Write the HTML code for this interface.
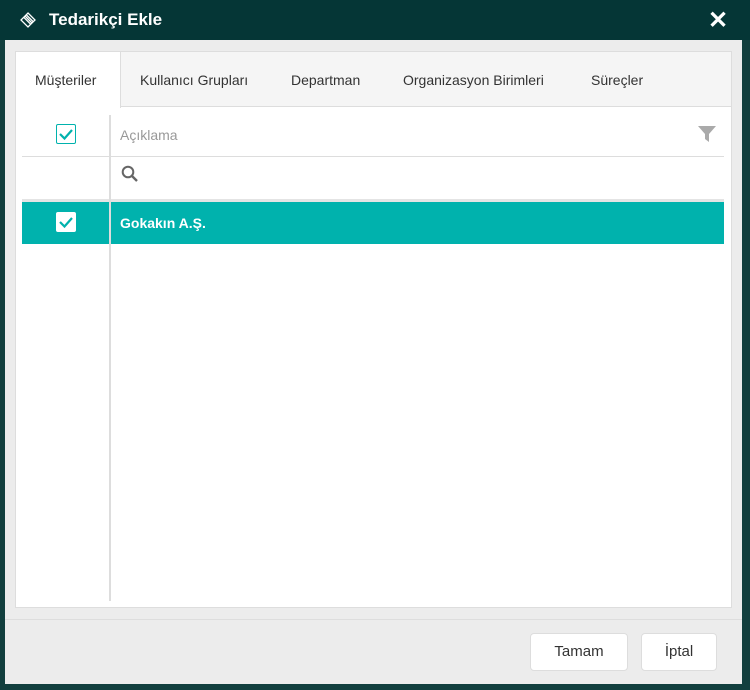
<!DOCTYPE html>
<html><head><meta charset="utf-8"><style>
*{box-sizing:border-box;margin:0;padding:0}
body{width:750px;height:690px;background:#123f3e;font-family:"Liberation Sans",sans-serif;position:relative;overflow:hidden}
.top{position:absolute;left:0;top:0;width:750px;height:40px;background:#053636}
.title{position:absolute;left:49px;top:10px;color:#fff;font-weight:bold;font-size:17px}
.x{position:absolute;left:708px;top:6px;color:#fff;font-weight:bold;font-size:24px}
.dlg{position:absolute;left:5px;top:40px;width:737px;height:644px;background:#ececec}
.panel{position:absolute;left:15px;top:51px;width:717px;height:557px;background:#fff;border:1px solid #ddd}
.tabs{position:absolute;left:16px;top:52px;width:715px;height:55px;background:#f5f5f5;border-bottom:1px solid #ddd}
.tab{position:absolute;top:20px;font-size:14px;color:#333}
.act{position:absolute;left:0;top:0;width:105px;height:56px;background:#fff;border-right:1px solid #ddd}
.vl{position:absolute;left:109px;top:115px;width:2px;height:486px;background:#ddd}
.hl{position:absolute;left:22px;width:702px;height:1px;background:#ddd}
.sel{position:absolute;left:22px;top:202px;width:702px;height:42px;background:#00b2ad}
.cb{position:absolute;width:20px;height:20px;border:1px solid #00b2ad;border-radius:2px;background:#fff}
.btn{position:absolute;top:633px;height:38px;background:#fff;border:1px solid #ddd;border-radius:4px;font-size:15px;color:#333;text-align:center;line-height:36px}
</style></head><body>
<div class="top"></div>
<svg style="position:absolute;left:20px;top:12px" width="16" height="16" viewBox="0 0 16 16"><g stroke="#fff" stroke-width="1.3"><path d="M8 1L15 8L8 15L1 8Z" fill="none"/><path d="M5 4L12 11M4 5.5L10.5 12M6.5 3L13 9.5"/></g></svg>
<div class="title">Tedarikçi Ekle</div>
<div class="x">✕</div>
<div class="dlg"></div>
<div style="position:absolute;left:5px;top:619px;width:737px;height:1px;background:#ddd"></div>
<div class="panel"></div>
<div class="tabs"><div class="act"></div>
<span class="tab" style="left:19px">Müşteriler</span>
<span class="tab" style="left:124px">Kullanıcı Grupları</span>
<span class="tab" style="left:275px">Departman</span>
<span class="tab" style="left:387px">Organizasyon Birimleri</span>
<span class="tab" style="left:575px">Süreçler</span></div>
<div class="cb" style="left:56px;top:124px"></div>
<svg style="position:absolute;left:56px;top:124px" width="20" height="20"><path d="M4 10L8.5 14.5L16 6" stroke="#00b2ad" stroke-width="2.2" fill="none"/></svg>
<div style="position:absolute;left:120px;top:127px;font-size:14px;color:#999">Açıklama</div>
<svg style="position:absolute;left:698px;top:126px" width="18" height="16"><path d="M0 0H18L11 8V16L7 13V8Z" fill="#aaa"/></svg>
<div class="hl" style="top:156px"></div>
<svg style="position:absolute;left:121px;top:165px" width="18" height="18"><circle cx="7" cy="7" r="5.3" stroke="#666" stroke-width="2" fill="none"/><path d="M11 11L16 16" stroke="#666" stroke-width="2.4"/></svg>
<div class="hl" style="top:199px;height:3px;background:#e4e4e4"></div>
<div class="sel"></div>
<div class="cb" style="left:56px;top:212px;border-color:#fff"></div>
<svg style="position:absolute;left:56px;top:212px" width="20" height="20"><path d="M4 10L8.5 14.5L16 6" stroke="#00b2ad" stroke-width="2.2" fill="none"/></svg>
<div style="position:absolute;left:120px;top:215px;font-size:14px;color:#fff;font-weight:bold">Gokakın A.Ş.</div>
<div class="vl"></div>
<div class="btn" style="left:530px;width:98px">Tamam</div>
<div class="btn" style="left:641px;width:76px">İptal</div>
</body></html>
